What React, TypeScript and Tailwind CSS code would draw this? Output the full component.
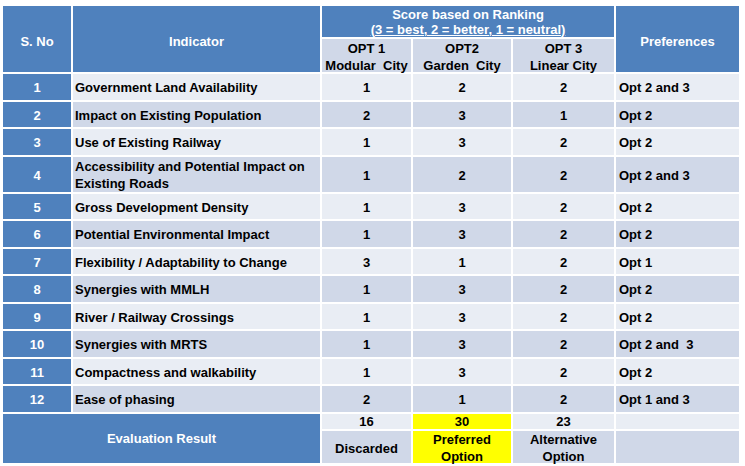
type Row = {
  no: string;
  indicator: string;
  scores: [string, string, string];
  pref: string;
  tall?: boolean;
};

const rows: Row[] = [
  { no: '1', indicator: 'Government Land Availability', scores: ['1', '2', '2'], pref: 'Opt 2 and 3' },
  { no: '2', indicator: 'Impact on Existing Population', scores: ['2', '3', '1'], pref: 'Opt 2' },
  { no: '3', indicator: 'Use of Existing Railway', scores: ['1', '3', '2'], pref: 'Opt 2' },
  {
    no: '4',
    indicator: 'Accessibility and Potential Impact on Existing Roads',
    scores: ['1', '2', '2'],
    pref: 'Opt 2 and 3',
    tall: true,
  },
  { no: '5', indicator: 'Gross Development Density', scores: ['1', '3', '2'], pref: 'Opt 2' },
  { no: '6', indicator: 'Potential Environmental Impact', scores: ['1', '3', '2'], pref: 'Opt 2' },
  { no: '7', indicator: 'Flexibility / Adaptability to Change', scores: ['3', '1', '2'], pref: 'Opt 1' },
  { no: '8', indicator: 'Synergies with MMLH', scores: ['1', '3', '2'], pref: 'Opt 2' },
  { no: '9', indicator: 'River / Railway Crossings', scores: ['1', '3', '2'], pref: 'Opt 2' },
  { no: '10', indicator: 'Synergies with MRTS', scores: ['1', '3', '2'], pref: 'Opt 2 and  3' },
  { no: '11', indicator: 'Compactness and walkability', scores: ['1', '3', '2'], pref: 'Opt 2' },
  { no: '12', indicator: 'Ease of phasing', scores: ['2', '1', '2'], pref: 'Opt 1 and 3' },
];

const blue = 'bg-[#4f81bd] text-white';
const light = 'bg-[#e9edf4]';
const dark = 'bg-[#d0d8e8]';

const App = () => (
  <div className="min-h-[466px] w-[745px] bg-white pl-[3px] pt-[6px] font-['Liberation_Sans',Arial,sans-serif] text-[13px] font-bold leading-[17px] text-black">
    <div className="grid w-[736px] grid-cols-[68px_247px_89px_98px_101px_123px] grid-rows-[31px_33px_repeat(3,25.5px)_35px_repeat(8,25.5px)_15px_32px] gap-[2px]">
      {/* header */}
      <div className={`${blue} row-span-2 flex items-center justify-center pt-[4px]`}>S. No</div>
      <div className={`${blue} row-span-2 flex items-center justify-center pt-[4px]`}>Indicator</div>
      <div className={`${blue} col-span-3 flex flex-col items-center justify-end leading-[15px]`}>
        <span>Score based on Ranking</span>
        <span className="underline decoration-1 underline-offset-1">(3 = best, 2 = better, 1 = neutral)</span>
      </div>
      <div className={`${blue} row-span-2 flex items-center justify-center pt-[4px]`}>Preferences</div>
      <div className={`${dark} flex flex-col items-center justify-center whitespace-pre pt-[2px]`}>
        <span>OPT 1</span>
        <span>Modular  City</span>
      </div>
      <div className={`${dark} flex flex-col items-center justify-center whitespace-pre pt-[2px]`}>
        <span>OPT2</span>
        <span>Garden  City</span>
      </div>
      <div className={`${dark} flex flex-col items-center justify-center whitespace-pre pt-[2px]`}>
        <span>OPT 3</span>
        <span>Linear City</span>
      </div>

      {/* body */}
      {rows.map((r, i) => {
        const bg = i % 2 === 0 ? light : dark;
        return (
          <div key={r.no} className="contents">
            <div className={`${blue} flex items-center justify-center pt-[2px]`}>{r.no}</div>
            <div className={`${bg} flex items-center pl-[2px] pt-[2px]`}>
              {r.tall ? (
                <span>
                  Accessibility and Potential Impact on
                  <br />
                  Existing Roads
                </span>
              ) : (
                r.indicator
              )}
            </div>
            {r.scores.map((s, j) => (
              <div key={j} className={`${bg} flex items-center justify-center pt-[2px]`}>
                {s}
              </div>
            ))}
            <div className={`${bg} flex items-center whitespace-pre pl-[3px] pt-[2px]`}>{r.pref}</div>
          </div>
        );
      })}

      {/* evaluation */}
      <div className={`${blue} col-span-2 row-span-2 flex items-center justify-center`}>Evaluation Result</div>
      <div className={`${light} flex items-center justify-center`}>16</div>
      <div className="flex items-center justify-center bg-[#ffff00]">30</div>
      <div className={`${light} flex items-center justify-center`}>23</div>
      <div className={light} />
      <div className={`${dark} flex items-center justify-center pt-[3px]`}>Discarded</div>
      <div className="flex flex-col items-center justify-center bg-[#ffff00] pt-[2px]">
        <span>Preferred</span>
        <span>Option</span>
      </div>
      <div className={`${dark} flex flex-col items-center justify-center pt-[2px]`}>
        <span>Alternative</span>
        <span>Option</span>
      </div>
      <div className={dark} />
    </div>
  </div>
);

export default App;
